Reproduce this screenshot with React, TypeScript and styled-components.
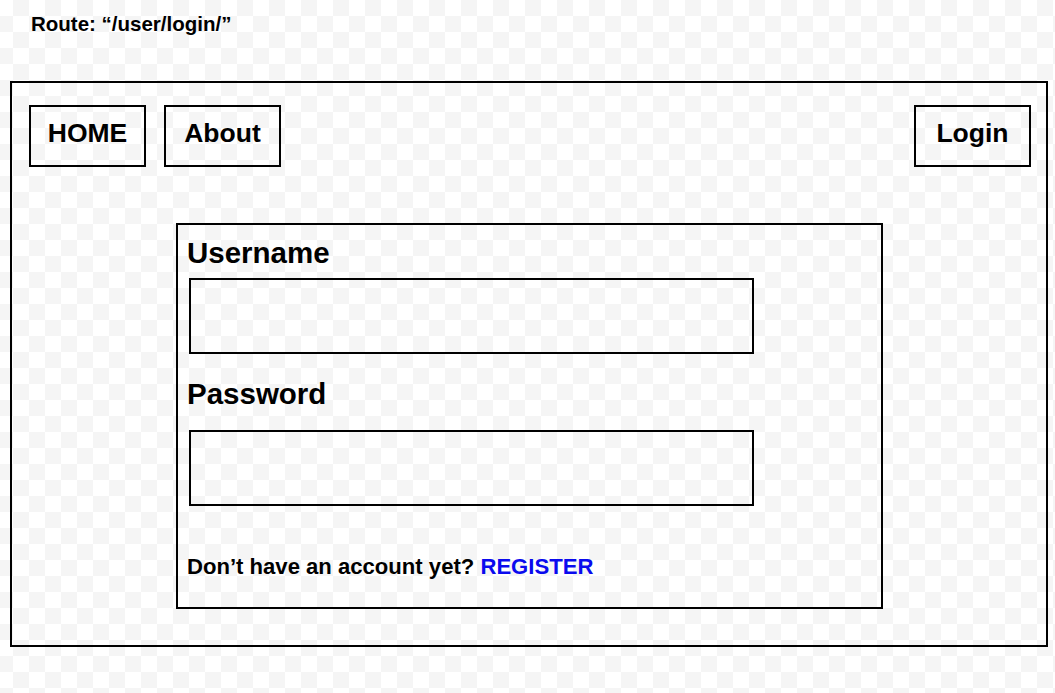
import styled, { createGlobalStyle } from 'styled-components';

const GlobalStyle = createGlobalStyle`
	body {
		margin: 0;
		font-family: 'Liberation Sans', Arial, sans-serif;
		color: #000;
		background-color: #ffffff;
		background-image:
			linear-gradient(45deg, #f5f5f5 25%, transparent 25%, transparent 75%, #f5f5f5 75%),
			linear-gradient(45deg, #f5f5f5 25%, transparent 25%, transparent 75%, #f5f5f5 75%);
		background-size: 32px 32px;
		background-position: -3px 0, 13px 16px;
		min-height: 693px;
	}
`;

const Page = () => {
	return (
		<>
			<GlobalStyle />
			<Route>Route: “/user/login/”</Route>
			<Frame>
				<Nav>
					<NavGroup>
						<NavButton>HOME</NavButton>
						<NavButton>About</NavButton>
					</NavGroup>
					<NavButton>Login</NavButton>
				</Nav>
				<Form>
					<Label>Username</Label>
					<Input type="text" />
					<Label $top={23} $bottom={20}>
						Password
					</Label>
					<Input type="password" />
					<Footer>
						Don’t have an account yet? <Register href="#">REGISTER</Register>
					</Footer>
				</Form>
			</Frame>
		</>
	);
};

const Route = styled.div`
	padding: 12px 0 0 31px;
	height: 81px;
	box-sizing: border-box;
	font-size: 20.5px;
	font-weight: bold;
`;

const Frame = styled.div`
	margin-left: 10px;
	width: 1038px;
	height: 566px;
	box-sizing: border-box;
	border: 2px solid #000;
	padding: 22px 15px 0 17px;
`;

const Nav = styled.nav`
	display: flex;
	justify-content: space-between;
`;

const NavGroup = styled.div`
	display: flex;
	gap: 18px;
`;

const NavButton = styled.button`
	width: 117px;
	height: 62px;
	box-sizing: border-box;
	border: 2px solid #000;
	background: transparent;
	font-family: inherit;
	font-size: 26.5px;
	font-weight: bold;
	color: #000;
	padding: 0 0 5px;
	cursor: pointer;
`;

const Form = styled.form`
	margin: 56px 0 0 147px;
	width: 707px;
	height: 386px;
	box-sizing: border-box;
	border: 2px solid #000;
	padding: 11px 10px 0 10px;
	display: flex;
	flex-direction: column;
	align-items: flex-start;
`;

const Label = styled.label<{ $top?: number; $bottom?: number }>`
	font-size: 29.5px;
	font-weight: bold;
	line-height: 33px;
	margin-left: -1px;
	margin-top: ${(p) => p.$top ?? 0}px;
	margin-bottom: ${(p) => p.$bottom ?? 9}px;
`;

const Input = styled.input`
	margin-left: 1px;
	width: 565px;
	height: 76px;
	box-sizing: border-box;
	border: 2px solid #000;
	background: transparent;
	outline: none;
`;

const Footer = styled.p`
	margin: 48px 0 0 -1px;
	font-size: 22.1px;
	font-weight: bold;
	line-height: 25px;
`;

const Register = styled.a`
	color: #0a0aee;
	text-decoration: none;
`;

export default Page;
